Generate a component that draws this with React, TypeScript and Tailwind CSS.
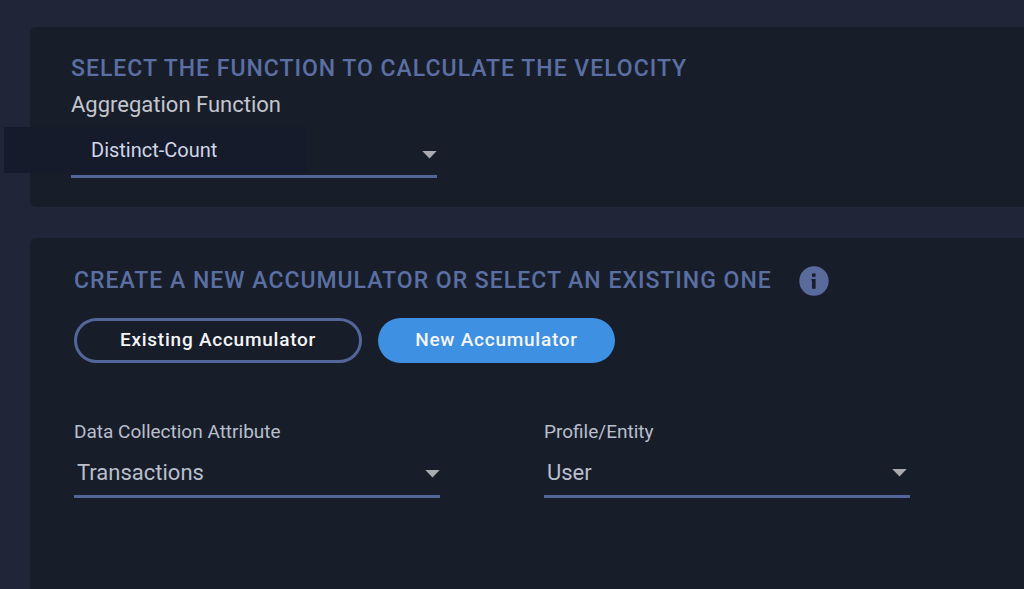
import { useState } from 'react'
import type { ReactNode } from 'react'

interface SelectFieldProps {
  id: string
  label: string
  options: string[]
  labelClass: string
  selectClass: string
  arrowClass: string
  backdrop?: ReactNode
}

/**
 * Labelled drop-down with an underline and a small triangle on the right.
 */
function SelectField({ id, label, options, labelClass, selectClass, arrowClass, backdrop }: SelectFieldProps) {
  const [value, setValue] = useState(options[0])

  return (
    <div className="flex w-full max-w-[366px] flex-col">
      <label htmlFor={id} className={labelClass}>
        {label}
      </label>
      <div className="relative">
        {backdrop}
        <select
          id={id}
          value={value}
          onChange={(e) => setValue(e.target.value)}
          className={`relative block w-full appearance-none border-b-3 border-[#53669a] bg-transparent outline-none ${selectClass}`}
        >
          {options.map((option) => (
            <option key={option} value={option}>
              {option}
            </option>
          ))}
        </select>
        <svg
          viewBox="0 0 15 8"
          className={`pointer-events-none absolute h-2 w-[15px] fill-[#a9abb0] ${arrowClass}`}
          aria-hidden="true"
        >
          <path d="M.3 0h14.4L7.5 7.6z" />
        </svg>
      </div>
    </div>
  )
}

function InfoIcon() {
  return (
    <svg viewBox="0 0 30 30" className="size-[30px] shrink-0" role="img" aria-label="Info">
      <circle cx="15" cy="15" r="14.7" fill="#596b9d" />
      <path d="M13 7.6h3.6v3.1H13zM12.6 13h4v9.7H13v-7.9h-.4z" fill="#181d2a" />
    </svg>
  )
}

const HEADING = 'text-[23px] leading-8 font-medium tracking-[1px] text-[#5b6fa3] uppercase'

export default function App() {
  const [mode, setMode] = useState<'existing' | 'new'>('new')

  return (
    <main className="flex min-h-screen flex-col gap-[31px] bg-[#202538] pt-[27px] pl-[30px] font-['Roboto',sans-serif]">
      {/* Velocity function */}
      <section className="rounded-l-md bg-[#181d2a] pt-[26px] pb-[29px] pl-[41px]">
        <h2 className={HEADING}>Select the function to calculate the velocity</h2>
        <div className="mt-[6px]">
          <SelectField
            id="aggregation"
            label="Aggregation Function"
            options={['Distinct-Count', 'Count', 'Sum', 'Average']}
            labelClass="mb-[5px] text-[22px] leading-7 text-[#c3c6ce]"
            selectClass="h-[54px] pl-5 text-[20px] text-[#d0d6e8]"
            arrowClass="top-[27px] right-0"
            backdrop={<div className="absolute top-[3px] -left-[67px] h-[46px] w-[303px] bg-[#161b2b]" />}
          />
        </div>
      </section>

      {/* Accumulator */}
      <section className="grow rounded-tl-md bg-[#181d2a] pt-[27px] pr-8 pb-10 pl-11">
        <div className="flex items-center gap-[27px]">
          <h2 className={HEADING}>Create a new accumulator or select an existing one</h2>
          <InfoIcon />
        </div>

        <div className="mt-[21px] flex gap-4 text-[19px] font-medium tracking-[0.04em] text-[#f4f5f7]">
          <button
            type="button"
            aria-pressed={mode === 'existing'}
            onClick={() => setMode('existing')}
            className="h-[45px] w-72 rounded-full border-3 border-[#53669a]"
          >
            Existing Accumulator
          </button>
          <button
            type="button"
            aria-pressed={mode === 'new'}
            onClick={() => setMode('new')}
            className="h-[45px] w-[237px] rounded-full bg-[#3e90e2]"
          >
            New Accumulator
          </button>
        </div>

        <div className="mt-[57px] flex gap-[104px]">
          <SelectField
            id="attribute"
            label="Data Collection Attribute"
            options={['Transactions', 'Logins', 'Payments']}
            labelClass="mb-[5px] text-[19px] leading-6 text-[#b9bfcc]"
            selectClass="h-[49px] pl-[3px] text-[22px] text-[#b9bfcc]"
            arrowClass="top-[21px] right-0"
          />
          <SelectField
            id="entity"
            label="Profile/Entity"
            options={['User', 'Account', 'Device']}
            labelClass="mb-[5px] text-[19px] leading-6 text-[#b9bfcc]"
            selectClass="h-[49px] pl-[3px] text-[22px] text-[#b9bfcc]"
            arrowClass="top-5 right-[3px]"
          />
        </div>
      </section>
    </main>
  )
}
